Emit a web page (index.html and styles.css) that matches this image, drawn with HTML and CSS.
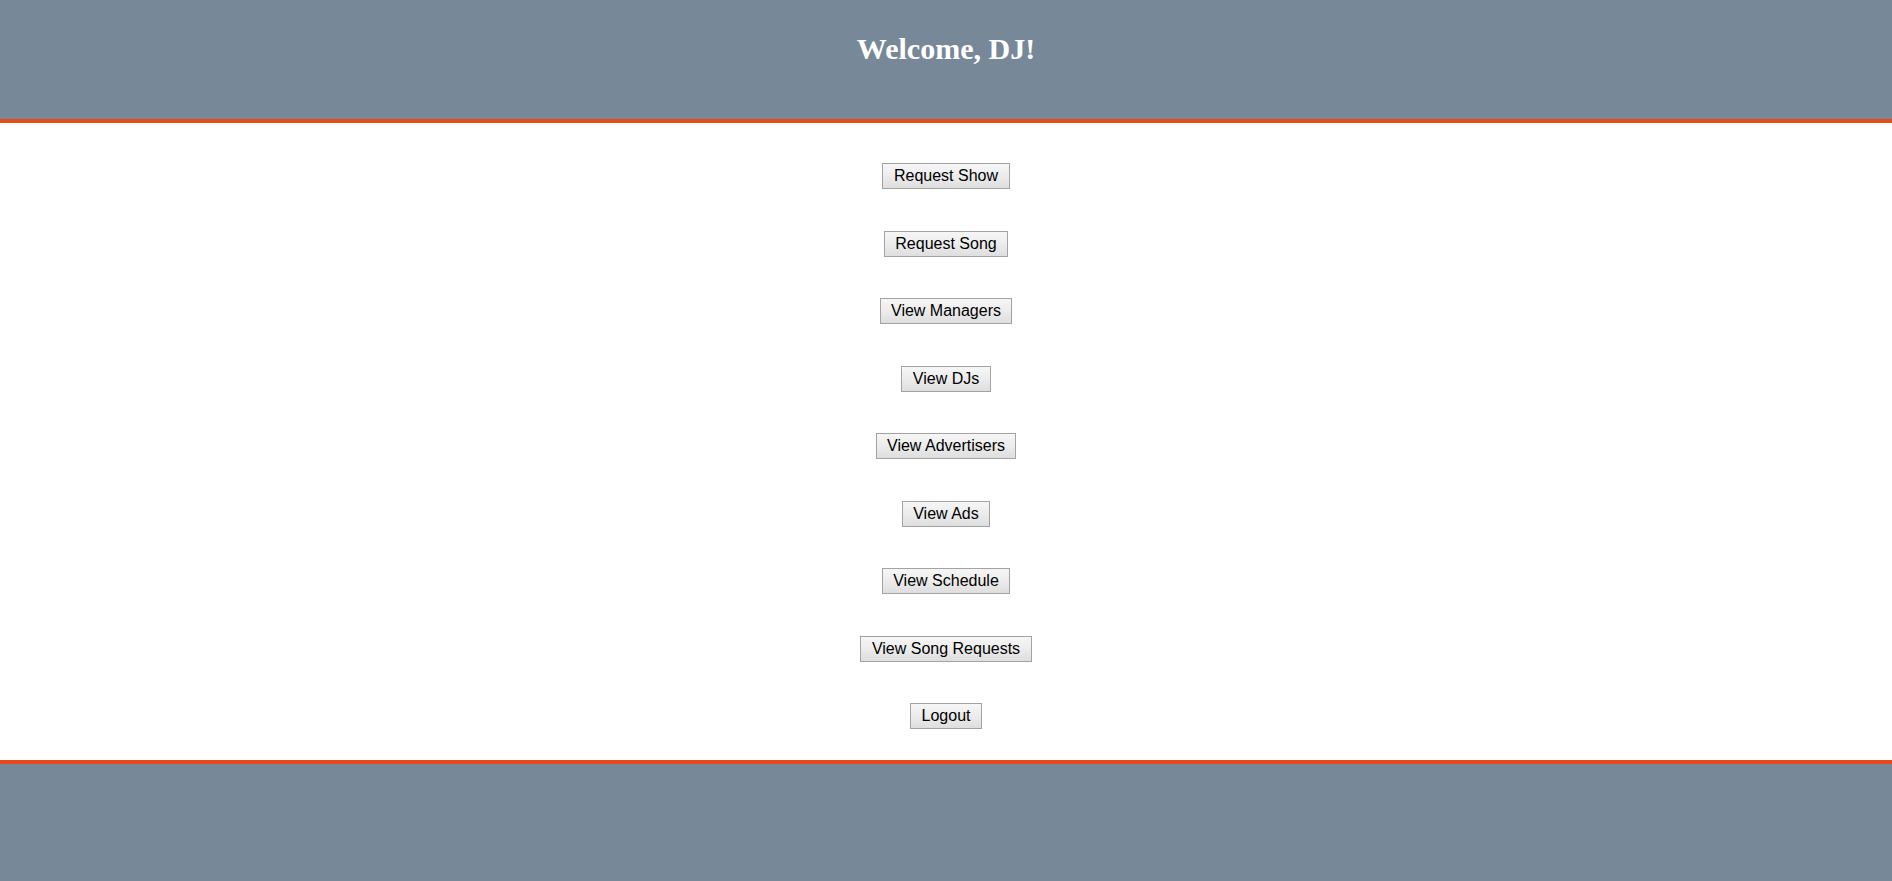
FILE: index.html
```html
<!DOCTYPE html>
<html lang="en">
<head>
<meta charset="utf-8">
<title>DJ Home</title>
<link rel="stylesheet" href="styles.css">
</head>
<body>
<header class="site-header">
  <h1 class="title">Welcome, DJ!</h1>
</header>
<main class="menu">
  <button class="btn" type="button">Request Show</button>
  <button class="btn" type="button">Request Song</button>
  <button class="btn" type="button">View Managers</button>
  <button class="btn" type="button">View DJs</button>
  <button class="btn" type="button">View Advertisers</button>
  <button class="btn" type="button">View Ads</button>
  <button class="btn" type="button">View Schedule</button>
  <button class="btn" type="button">View Song Requests</button>
  <button class="btn" type="button">Logout</button>
</main>
<footer class="site-footer"></footer>
</body>
</html>
```

FILE: styles.css
```css
html, body {
  margin: 0;
  padding: 0;
}
body {
  background: #ffffff;
  font-family: "Liberation Serif", "Times New Roman", serif;
  min-height: 881px;
  display: flex;
  flex-direction: column;
}
.site-header {
  flex-shrink: 0;
  background: #778899;
  height: 119px;
  border-bottom: 4px solid #e64a19;
  box-sizing: content-box;
}
.title {
  margin: 0;
  padding-top: 31px;
  text-align: center;
  color: #ffffff;
  font-size: 30px;
  font-weight: bold;
  line-height: 35px;
}
.menu {
  flex-shrink: 0;
  display: flex;
  flex-direction: column;
  align-items: center;
  gap: 41.5px;
  padding-top: 40.3px;
  height: 637px;
  box-sizing: border-box;
}
.btn {
  flex-shrink: 0;
  font-family: "Liberation Sans", Arial, sans-serif;
  font-size: 16px;
  line-height: 18px;
  height: 26px;
  padding: 3px 10.5px;
  margin: 0;
  color: #000000;
  border: 1px solid #a3a3a3;
  border-radius: 0;
  background: linear-gradient(to bottom, #f6f6f6 0%, #ececec 50%, #dedede 100%);
  box-sizing: border-box;
}
.site-footer {
  flex: 1;
  background: #778899;
  border-top: 4px solid #e64a19;
}
```
